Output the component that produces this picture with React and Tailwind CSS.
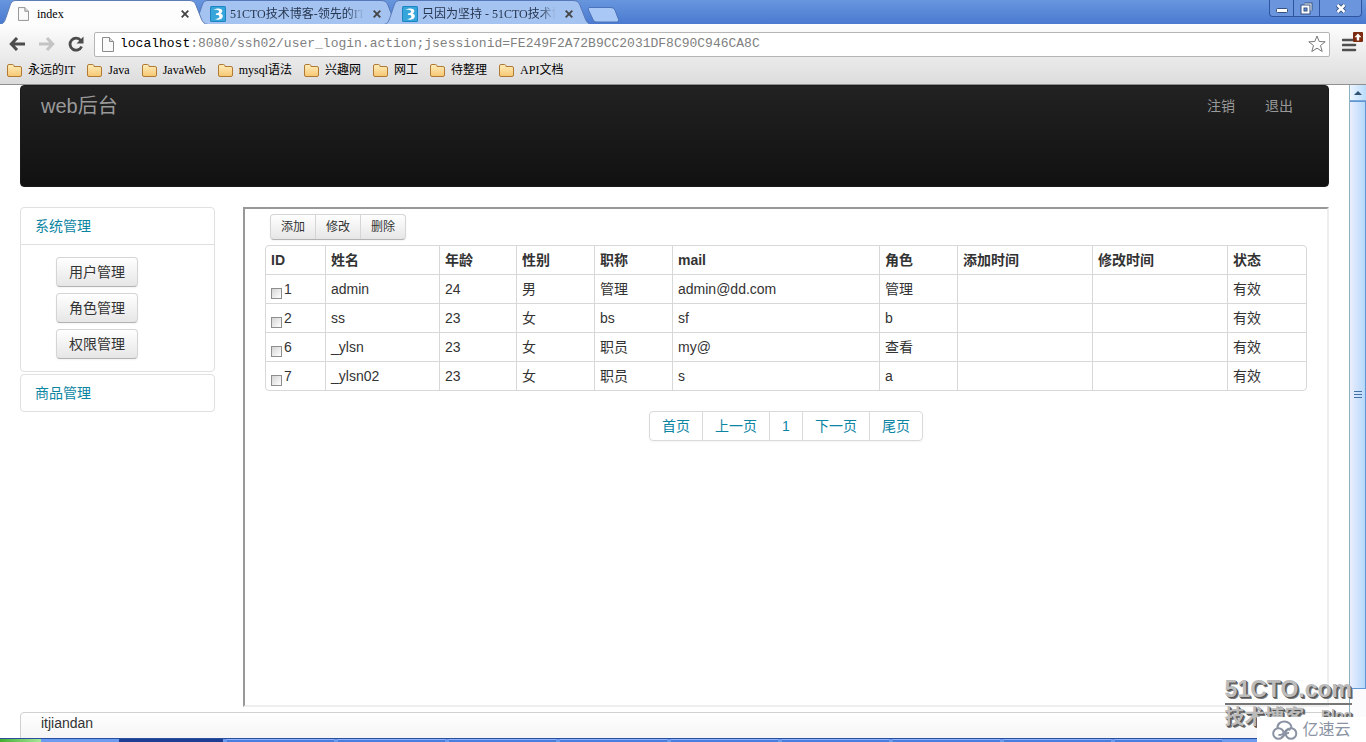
import { clsx } from 'clsx';

const tabs = [
  { id: 1, title: 'index', active: true },
  { id: 2, title: '51CTO技术博客-领先的IT技' },
  { id: 3, title: '只因为坚持 - 51CTO技术博' },
];

const bookmarks = ['永远的IT', 'Java', 'JavaWeb', 'mysql语法', '兴趣网', '网工', '待整理', 'API文档'];

const columns = [
  { key: 'id', label: 'ID', width: 'w-[59px]' },
  { key: 'name', label: '姓名', width: 'w-[114px]' },
  { key: 'age', label: '年龄', width: 'w-[77px]' },
  { key: 'sex', label: '性别', width: 'w-[78px]' },
  { key: 'title', label: '职称', width: 'w-[78px]' },
  { key: 'mail', label: 'mail', width: 'w-[207px]' },
  { key: 'role', label: '角色', width: 'w-[78px]' },
  { key: 'created', label: '添加时间', width: 'w-[135px]' },
  { key: 'updated', label: '修改时间', width: 'w-[135px]' },
  { key: 'status', label: '状态', width: 'w-[79px]' },
];

const users = [
  { id: 1, name: 'admin', age: 24, sex: '男', title: '管理', mail: 'admin@dd.com', role: '管理', status: '有效' },
  { id: 2, name: 'ss', age: 23, sex: '女', title: 'bs', mail: 'sf', role: 'b', status: '有效' },
  { id: 6, name: '_ylsn', age: 23, sex: '女', title: '职员', mail: 'my@', role: '查看', status: '有效' },
  { id: 7, name: '_ylsn02', age: 23, sex: '女', title: '职员', mail: 's', role: 'a', status: '有效' },
];

const pages = ['首页', '上一页', '1', '下一页', '尾页'];

function PageIcon({ className }) {
  return (
    <svg viewBox="0 0 12 15" className={clsx('shrink-0', className)} fill="#fafafa" stroke="#8a8a8a">
      <path d="M.5.5h7l4 4v10H.5z" />
      <path d="M7.5.5v4h4" fill="#ddd" />
    </svg>
  );
}

function SiteIcon() {
  return (
    <svg viewBox="0 0 16 16" className="h-4 w-4 shrink-0">
      <rect width="16" height="16" rx="1.5" fill="#1c86c4" />
      <rect x="1" y="1" width="14" height="14" rx="1" fill="#35a5da" />
      <path d="M3.500 4C7 1.800 12.800 2.200 12.300 5.300c-.2 1.300-1 1.900-1.800 2.300 1.800.4 2.700 1.600 2.200 3.400C11.800 14 7.500 14.300 5 13c2.500 0 4.500-.8 4.400-2.400C9.300 9 7.500 8.800 5.800 9L6 7.400c1.800 0 3.200-.6 3.200-1.800C9.200 4 6 3.600 3.500 4z" fill="#fff" />
    </svg>
  );
}

function FolderIcon() {
  return (
    <svg viewBox="0 0 15 13" className="h-[13px] w-[15px] shrink-0">
      <defs>
        <linearGradient id="folder" x1="0" y1="0" x2="0" y2="1">
          <stop offset="0" stopColor="#ffeebc" />
          <stop offset="1" stopColor="#f6c771" />
        </linearGradient>
      </defs>
      <path d="M.5 11V2Q.5.5 2 .5h3.500q1 0 1.300 1l.2 1H13q1.500 0 1.500 1.500v7q0 1.500-1.500 1.500H2Q.5 12.500.5 11z" fill="url(#folder)" stroke="#b07a35" />
    </svg>
  );
}

function CloseIcon() {
  return (
    <svg viewBox="0 0 8 8" className="h-2 w-2" stroke="#444" strokeWidth="1.8">
      <path d="M.7.7l6.600 6.600M7.300.7L.7 7.300" />
    </svg>
  );
}

function Tab({ tab }) {
  return (
    <div className={clsx('relative h-6', tab.active ? 'z-10 w-[208px]' : '-ml-4 w-[208px]')}>
      <svg viewBox="0 0 208 24" preserveAspectRatio="none" className="absolute inset-0 h-6 w-full">
        <path
          d="M0 24.500c4-1 4.500-3 6-7L10.500 4Q12 .5 15 .5H190q4 0 5.500 3.500L201 18c1.500 4 3 6 7 6.500z"
          fill={tab.active ? '#fdfdfd' : '#a5c3f0'}
          stroke={tab.active ? '#5c7db5' : '#5578b8'}
        />
      </svg>
      <div className="relative flex h-6 items-center gap-1 pt-[3px] pr-[18px] pl-[18px] text-xs text-black">
        {tab.active ? <PageIcon className="mr-1 h-[14px] w-[11px]" /> : <SiteIcon />}
        <span
          className={clsx(
            'min-w-0 flex-1 whitespace-nowrap',
            !tab.active && 'text-[#26364f] [mask-image:linear-gradient(to_right,black_88%,transparent)]',
          )}
        >
          {tab.title}
        </span>
        <button type="button" aria-label="关闭" className="ml-1 p-px">
          <CloseIcon />
        </button>
      </div>
    </div>
  );
}

function WindowControls() {
  return (
    <div className="mr-1 flex h-[17px] rounded-b border border-t-0 border-[#2f55a0] bg-[#6b96de]">
      <button type="button" aria-label="最小化" className="flex w-6 items-center justify-center border-r border-[#2f55a0]">
        <svg viewBox="0 0 12 12" className="h-3 w-3">
          <rect x=".5" y="6.500" width="11" height="4" rx="1" fill="#fff" stroke="#34507f" />
        </svg>
      </button>
      <button type="button" aria-label="还原" className="flex w-[26px] items-center justify-center border-r border-[#2f55a0]">
        <svg viewBox="0 0 13 13" className="h-[13px] w-[13px]" fill="none">
          <path d="M4.500 2.500h6v6" stroke="#34507f" strokeWidth="4" />
          <path d="M4.500 2.500h6v6" stroke="#fff" strokeWidth="2" />
          <rect x="2.500" y="4.500" width="6" height="6" stroke="#34507f" strokeWidth="4" />
          <rect x="2.500" y="4.500" width="6" height="6" stroke="#fff" strokeWidth="2" />
        </svg>
      </button>
      <button type="button" aria-label="关闭窗口" className="flex w-[41px] items-center justify-center">
        <svg viewBox="0 0 12 11" className="h-[11px] w-3" fill="none">
          <path d="M2.500 2l7 7M9.500 2l-7 7" stroke="#34507f" strokeWidth="4.500" />
          <path d="M2.500 2l7 7M9.500 2l-7 7" stroke="#fff" strokeWidth="2.500" />
        </svg>
      </button>
    </div>
  );
}

function Toolbar() {
  return (
    <div className="flex h-9 items-center pt-1 pr-[3px] pl-[9px]">
      <button type="button" aria-label="后退" className="mr-[14px]">
        <svg viewBox="0 0 16 14" className="h-[14px] w-4" fill="none" stroke="#4c4c4c" strokeWidth="3">
          <path d="M8 1L2.300 7 8 13M3 7h13" />
        </svg>
      </button>
      <button type="button" aria-label="前进" className="mr-[13px]">
        <svg viewBox="0 0 16 14" className="h-[14px] w-4" fill="none" stroke="#c4c4c4" strokeWidth="3">
          <path d="M8 1l5.700 6L8 13M13 7H0" />
        </svg>
      </button>
      <button type="button" aria-label="刷新" className="mr-[10px]">
        <svg viewBox="0 0 16 16" className="h-4 w-4" fill="none">
          <path d="M12.800 4.500A6 6 0 1 0 13.600 10.500" stroke="#4c4c4c" strokeWidth="2.800" />
          <path d="M15.500.5v7h-7z" fill="#4c4c4c" />
        </svg>
      </button>
      <div className="flex h-[25px] flex-1 items-center rounded-xs border border-[#b5b5b5] bg-white pr-[3px] pl-[7px]">
        <PageIcon className="mr-[6px] h-[15px] w-3" />
        <div className="flex-1 font-['Liberation_Mono',monospace] text-[13px] text-black">
          localhost
          <span className="text-[#808080]">:8080/ssh02/user_login.action;jsessionid=FE249F2A72B9CC2031DF8C90C946CA8C</span>
        </div>
        <button type="button" aria-label="收藏">
          <svg viewBox="0 0 18 18" className="h-[18px] w-[18px]" fill="#fff" stroke="#777" strokeLinejoin="round">
            <path d="M9 1l2.200 5.500 6 .3-4.700 3.700 1.700 6L9 13.200 3.800 16.500l1.700-6L.8 6.800l6-.3z" />
          </svg>
        </button>
      </div>
      <button type="button" aria-label="菜单" className="mb-1 ml-3">
        <svg viewBox="0 0 21 22" className="h-[22px] w-[21px]">
          <path d="M1 9h12M1 14h12M1 19h12" stroke="#505050" strokeWidth="2.600" strokeLinecap="round" />
          <rect x="11" y="1" width="10" height="10" rx="1" fill="#7c2a10" />
          <path d="M16 2.500l3.500 3.800h-2.300V9.500h-2.400V6.300h-2.300z" fill="#fff" />
        </svg>
      </button>
    </div>
  );
}

function BrowserChrome() {
  return (
    <header className="shrink-0 font-['Liberation_Serif','Noto_Sans_CJK_SC',serif]">
      <div className="flex h-6 justify-between bg-linear-to-b from-[#6896de] to-[#4a7ad0]">
        <div className="flex">
          {tabs.map((tab) => (
            <Tab key={tab.id} tab={tab} />
          ))}
          <button type="button" aria-label="新标签页" className="-ml-1 pt-[5px]">
            <svg viewBox="0 0 32 16" className="h-4 w-8">
              <path d="M1 .5h22q3 0 4 2.500l3.500 9.500q1 2.500-2 2.500H8q-2 0-3-2.500L.5 3Q0 .5 1 .5z" fill="#a9c8f5" stroke="#4c72b8" />
            </svg>
          </button>
        </div>
        <WindowControls />
      </div>
      <div className="border-b border-[#909090] bg-linear-to-b from-[#fdfdfd] to-[#dcdcdc]">
        <Toolbar />
        <nav className="flex h-6 gap-3 pb-1 pl-[7px]">
          {bookmarks.map((name) => (
            <a key={name} href="#" className="flex items-center gap-[6px] text-xs whitespace-nowrap text-black">
              <FolderIcon />
              {name}
            </a>
          ))}
        </nav>
      </div>
    </header>
  );
}

function Navbar() {
  return (
    <nav className="flex h-[102px] items-start justify-between rounded border border-[#1a1a1a] bg-linear-to-b from-[#222] to-[#111] px-5 text-[#999]">
      <a href="#" className="py-[10px] text-xl leading-5">web后台</a>
      <div className="flex pr-[15px]">
        <a href="#" className="py-[10px] pr-[15px] text-sm leading-5">注销</a>
        <a href="#" className="py-[10px] pl-[15px] text-sm leading-5">退出</a>
      </div>
    </nav>
  );
}

function Sidebar() {
  return (
    <aside className="w-[195px] shrink-0">
      <div className="mb-[2px] rounded border border-[#e0e0e0]">
        <a href="#" className="block px-[14px] py-2 text-[#0c85a3]">系统管理</a>
        <div className="flex flex-col items-start gap-[6px] border-t border-[#e0e0e0] py-3 pl-[35px]">
          {['用户管理', '角色管理', '权限管理'].map((name) => (
            <button
              key={name}
              type="button"
              className="rounded border border-[#d5d5d5] border-b-[#b3b3b3] bg-linear-to-b from-white to-[#e6e6e6] px-3 py-1 text-[#333] shadow-xs"
            >
              {name}
            </button>
          ))}
        </div>
      </div>
      <div className="rounded border border-[#e0e0e0]">
        <a href="#" className="block px-[14px] py-2 text-[#0c85a3]">商品管理</a>
      </div>
    </aside>
  );
}

function UserTable() {
  return (
    <table className="w-full table-fixed border-separate border-spacing-0 rounded border border-[#d8d8d8] text-left">
      <thead>
        <tr>
          {columns.map((col, i) => (
            <th key={col.key} scope="col" className={clsx('border-[#d8d8d8] px-[5px] py-1 font-bold', col.width, i > 0 && 'border-l')}>
              {col.label}
            </th>
          ))}
        </tr>
      </thead>
      <tbody>
        {users.map((user) => (
          <tr key={user.id}>
            {columns.map((col, i) => (
              <td key={col.key} className={clsx('h-[29px] border-t border-[#d8d8d8] px-[5px] py-1', i > 0 && 'border-l')}>
                {col.key === 'id' ? (
                  <label className="flex gap-[2px]">
                    <input
                      type="checkbox"
                      className="mt-[9px] h-[11px] w-[11px] appearance-none border border-[#8e8e8e] bg-linear-to-br from-[#d4d4d4] to-white checked:bg-[#555]"
                    />
                    {user.id}
                  </label>
                ) : (
                  user[col.key]
                )}
              </td>
            ))}
          </tr>
        ))}
      </tbody>
    </table>
  );
}

function UserPanel() {
  return (
    <main className="h-[500px] flex-1 border-2 border-t-[#989898] border-r-[#eee] border-b-[#eee] border-l-[#989898] px-5 pt-[5px]">
      <div className="mb-[5px] ml-[5px] inline-flex rounded border border-[#d5d5d5] border-b-[#b3b3b3] bg-linear-to-b from-white to-[#e6e6e6] shadow-xs">
        {['添加', '修改', '删除'].map((name, i) => (
          <button key={name} type="button" className={clsx('px-[10px] py-[2px] text-xs leading-5 text-[#333]', i > 0 && 'border-l border-[#d5d5d5]')}>
            {name}
          </button>
        ))}
      </div>
      <UserTable />
      <nav className="mt-5 flex justify-center">
        <div className="flex rounded border border-[#dadada] shadow-xs">
          {pages.map((name, i) => (
            <a key={name} href="#" className={clsx('border-[#dadada] px-3 py-1 text-[#0c85a3]', i > 0 && 'border-l')}>
              {name}
            </a>
          ))}
        </div>
      </nav>
    </main>
  );
}

function Scrollbar() {
  return (
    <div className="flex w-[17px] shrink-0 flex-col border-l border-[#8fb0c0] bg-[#fbfbfd]">
      <div className="flex h-4 items-center justify-center border-b border-[#7fa8d8] bg-linear-to-r from-[#eef5ff] to-[#b8dcfb]">
        <svg viewBox="0 0 8 4" className="h-1 w-2">
          <path d="M0 4l4-4 4 4z" fill="#2f5370" />
        </svg>
      </div>
      <div className="flex h-[588px] items-center justify-center border-t border-r border-b border-[#5f97d5] bg-linear-to-r from-[#eceeff] to-[#b4d8fa]">
        <svg viewBox="0 0 8 8" className="h-2 w-2" stroke="#4273a8">
          <path d="M0 .5h8M0 3.500h8M0 6.500h8" />
        </svg>
      </div>
    </div>
  );
}

function Taskbar() {
  return (
    <div className="flex h-1 shrink-0 border-t border-[#2b4f9e] bg-[#6c9cf0]">
      <div className="mr-[78px] w-[41px] bg-linear-to-r from-[#3fae2c] to-[#a5e89a]" />
      <div className="w-[104px] bg-[#1c3f94]" />
      {[1, 2, 3, 4, 5, 6, 7, 8, 9].map((n) => (
        <div key={n} className="ml-[4px] w-[107px] border-t border-[#8db4fa] bg-[#4a7de0]" />
      ))}
    </div>
  );
}

function Watermark() {
  return (
    <div className="absolute right-0 bottom-0 flex flex-col items-end">
      <div className="mr-[14px] -mb-3 flex flex-col font-bold text-[#bcbcbc] [text-shadow:1px_1px_0_#555,2px_2px_0_#777]">
        <span className="border-b-2 border-[#777] text-[23px] leading-7">51CTO.com</span>
        <span className="flex justify-between text-xl leading-6">
          技术博客
          <span className="text-sm">Blog</span>
        </span>
      </div>
      <div className="relative flex h-[25px] w-[109px] items-center justify-center gap-1 bg-white text-base leading-none text-[#8a93a3]">
        <svg viewBox="0 0 26 20" className="h-5 w-[26px]" fill="none" stroke="#8a93a3" strokeWidth="2">
          <path d="M5.500 8.500C5 3.500 9 1.500 12.500 1.500S19.500 4 19.500 8" />
          <circle cx="6.500" cy="13.500" r="5.300" />
          <circle cx="19" cy="13.500" r="5.300" />
          <path d="M6.500 14.500c2.500 1.500 4.500-.5 6-2.500s3.500-3.500 6-2M9 17.500c3.500-.5 4-5.500 8-4.500" />
        </svg>
        亿速云
      </div>
    </div>
  );
}

export default function App() {
  return (
    <div className="relative flex h-screen flex-col overflow-hidden bg-white font-['Liberation_Sans','Noto_Sans_CJK_SC',sans-serif] text-sm leading-5 text-[#333]">
      <BrowserChrome />
      <div className="flex min-h-0 flex-1">
        <div className="min-w-0 flex-1 overflow-hidden px-5">
          <Navbar />
          <div className="mt-5 mb-[5px] flex items-start gap-7">
            <Sidebar />
            <UserPanel />
          </div>
          <footer className="h-10 rounded border border-[#d0d0d0] bg-linear-to-b from-white to-[#f0f0f0] px-5">itjiandan</footer>
        </div>
        <Scrollbar />
      </div>
      <Taskbar />
      <Watermark />
    </div>
  );
}
